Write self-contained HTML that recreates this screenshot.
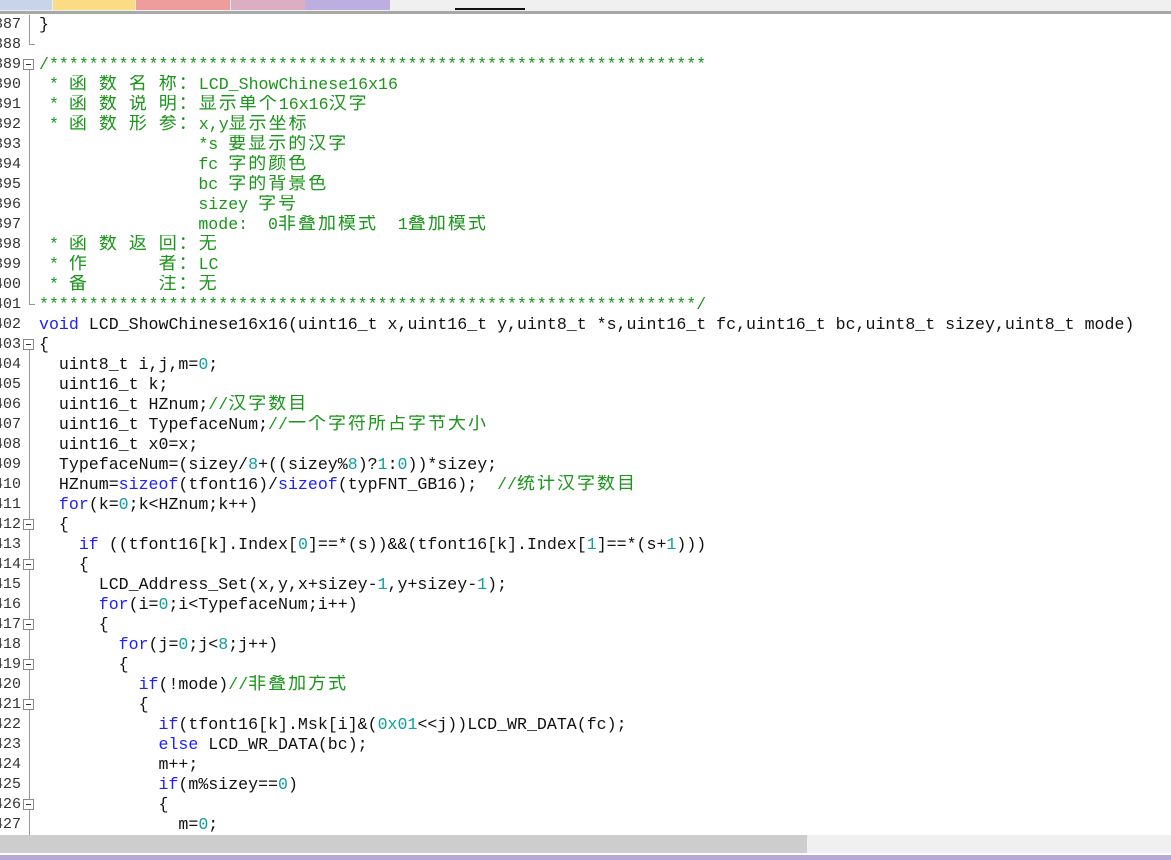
<!DOCTYPE html>
<html><head><meta charset="utf-8"><style>
html,body{margin:0;padding:0;width:1171px;height:860px;overflow:hidden;background:#fff;position:relative}
.tabs{position:absolute;left:0;top:0;width:1171px;height:11px;background:#f0f0f0}
.tab{position:absolute;top:0;height:10px}
.sep{position:absolute;top:11px;left:0;width:1171px;height:3px;background:#a8a8a8}
.code{position:absolute;left:0;top:15px;width:1171px}
.row{position:relative;height:20px;overflow:hidden;font:16.6px/20px "Liberation Mono","Noto Sans CJK SC",monospace;white-space:pre;color:#111}
.ln{position:absolute;right:1150px;top:0;color:#333;width:60px;text-align:right;font-size:15px}
.t{position:absolute;left:39px;top:0;line-height:20px}
.c{color:#1a961a}
.k{color:#2020ff}
.n{color:#10a0a0}
.z{letter-spacing:2px;font-family:"Noto Sans CJK SC",sans-serif;font-size:18px;line-height:0;vertical-align:baseline}
.vl{position:absolute;left:29px;width:1px;background:#999}
.fb{position:absolute;left:23px;width:9px;height:9px;border:1px solid #888;background:#fff}
.fb:after{content:"";position:absolute;left:2px;top:4px;width:5px;height:1px;background:#333}
</style></head><body>
<div class="tabs">
<div class="tab" style="left:0;width:52px;background:#c8d4e8"></div>
<div class="tab" style="left:53px;width:82px;background:#fbdc84"></div>
<div class="tab" style="left:136px;width:94px;background:#ee9c9c"></div>
<div class="tab" style="left:231px;width:74px;background:#dcaec4"></div>
<div class="tab" style="left:305px;width:85px;background:#bcaedf"></div>
<div class="tab" style="left:455px;width:70px;height:2px;top:8px;background:#111"></div>
</div>
<div class="sep"></div>
<div class="vl" style="top:15px;height:30px"></div>
<div class="vl" style="top:44px;left:29px;height:1px;width:6px"></div>
<div class="vl" style="top:70px;height:235px"></div>
<div class="vl" style="top:304px;height:1px;width:6px"></div>
<div class="vl" style="top:350px;height:485px"></div>
<div class="code">
<div class="row"><span class="ln">387</span><span class="t">}</span></div>
<div class="row"><span class="ln">388</span></div>
<div class="row"><span class="ln">389</span><span class="t c">/******************************************************************</span></div>
<div class="row"><span class="ln">390</span><span class="t c"> * <span class="z">函</span> <span class="z">数</span> <span class="z">名</span> <span class="z">称：</span>LCD_ShowChinese16x16</span></div>
<div class="row"><span class="ln">391</span><span class="t c"> * <span class="z">函</span> <span class="z">数</span> <span class="z">说</span> <span class="z">明：显示单个</span>16x16<span class="z">汉字</span></span></div>
<div class="row"><span class="ln">392</span><span class="t c"> * <span class="z">函</span> <span class="z">数</span> <span class="z">形</span> <span class="z">参：</span>x,y<span class="z">显示坐标</span></span></div>
<div class="row"><span class="ln">393</span><span class="t c">                *s <span class="z">要显示的汉字</span></span></div>
<div class="row"><span class="ln">394</span><span class="t c">                fc <span class="z">字的颜色</span></span></div>
<div class="row"><span class="ln">395</span><span class="t c">                bc <span class="z">字的背景色</span></span></div>
<div class="row"><span class="ln">396</span><span class="t c">                sizey <span class="z">字号</span></span></div>
<div class="row"><span class="ln">397</span><span class="t c">                mode:  0<span class="z">非叠加模式</span>  1<span class="z">叠加模式</span></span></div>
<div class="row"><span class="ln">398</span><span class="t c"> * <span class="z">函</span> <span class="z">数</span> <span class="z">返</span> <span class="z">回：无</span></span></div>
<div class="row"><span class="ln">399</span><span class="t c"> * <span class="z">作</span>       <span class="z">者：</span>LC</span></div>
<div class="row"><span class="ln">400</span><span class="t c"> * <span class="z">备</span>       <span class="z">注：无</span></span></div>
<div class="row"><span class="ln">401</span><span class="t c">******************************************************************/</span></div>
<div class="row"><span class="ln">402</span><span class="t"><span class="k">void</span> LCD_ShowChinese16x16(uint16_t x,uint16_t y,uint8_t *s,uint16_t fc,uint16_t bc,uint8_t sizey,uint8_t mode)</span></div>
<div class="row"><span class="ln">403</span><span class="t">{</span></div>
<div class="row"><span class="ln">404</span><span class="t">  uint8_t i,j,m=<span class="n">0</span>;</span></div>
<div class="row"><span class="ln">405</span><span class="t">  uint16_t k;</span></div>
<div class="row"><span class="ln">406</span><span class="t">  uint16_t HZnum;<span class="c">//<span class="z">汉字数目</span></span></span></div>
<div class="row"><span class="ln">407</span><span class="t">  uint16_t TypefaceNum;<span class="c">//<span class="z">一个字符所占字节大小</span></span></span></div>
<div class="row"><span class="ln">408</span><span class="t">  uint16_t x0=x;</span></div>
<div class="row"><span class="ln">409</span><span class="t">  TypefaceNum=(sizey/<span class="n">8</span>+((sizey%<span class="n">8</span>)?<span class="n">1</span>:<span class="n">0</span>))*sizey;</span></div>
<div class="row"><span class="ln">410</span><span class="t">  HZnum=<span class="k">sizeof</span>(tfont16)/<span class="k">sizeof</span>(typFNT_GB16);  <span class="c">//<span class="z">统计汉字数目</span></span></span></div>
<div class="row"><span class="ln">411</span><span class="t">  <span class="k">for</span>(k=<span class="n">0</span>;k&lt;HZnum;k++)</span></div>
<div class="row"><span class="ln">412</span><span class="t">  {</span></div>
<div class="row"><span class="ln">413</span><span class="t">    <span class="k">if</span> ((tfont16[k].Index[<span class="n">0</span>]==*(s))&amp;&amp;(tfont16[k].Index[<span class="n">1</span>]==*(s+<span class="n">1</span>)))</span></div>
<div class="row"><span class="ln">414</span><span class="t">    {</span></div>
<div class="row"><span class="ln">415</span><span class="t">      LCD_Address_Set(x,y,x+sizey-<span class="n">1</span>,y+sizey-<span class="n">1</span>);</span></div>
<div class="row"><span class="ln">416</span><span class="t">      <span class="k">for</span>(i=<span class="n">0</span>;i&lt;TypefaceNum;i++)</span></div>
<div class="row"><span class="ln">417</span><span class="t">      {</span></div>
<div class="row"><span class="ln">418</span><span class="t">        <span class="k">for</span>(j=<span class="n">0</span>;j&lt;<span class="n">8</span>;j++)</span></div>
<div class="row"><span class="ln">419</span><span class="t">        {</span></div>
<div class="row"><span class="ln">420</span><span class="t">          <span class="k">if</span>(!mode)<span class="c">//<span class="z">非叠加方式</span></span></span></div>
<div class="row"><span class="ln">421</span><span class="t">          {</span></div>
<div class="row"><span class="ln">422</span><span class="t">            <span class="k">if</span>(tfont16[k].Msk[i]&amp;(<span class="n">0x01</span>&lt;&lt;j))LCD_WR_DATA(fc);</span></div>
<div class="row"><span class="ln">423</span><span class="t">            <span class="k">else</span> LCD_WR_DATA(bc);</span></div>
<div class="row"><span class="ln">424</span><span class="t">            m++;</span></div>
<div class="row"><span class="ln">425</span><span class="t">            <span class="k">if</span>(m%sizey==<span class="n">0</span>)</span></div>
<div class="row"><span class="ln">426</span><span class="t">            {</span></div>
<div class="row"><span class="ln">427</span><span class="t">              m=<span class="n">0</span>;</span></div>
</div>
<div class="fb" style="top:59px"></div>
<div class="fb" style="top:339px"></div>
<div class="fb" style="top:519px"></div>
<div class="fb" style="top:559px"></div>
<div class="fb" style="top:619px"></div>
<div class="fb" style="top:659px"></div>
<div class="fb" style="top:699px"></div>
<div class="fb" style="top:799px"></div>
<div style="position:absolute;left:0;top:835px;width:1171px;height:18px;background:#f0f0f0"></div>
<div style="position:absolute;left:0;top:835px;width:807px;height:18px;background:#cdcdcd"></div>
<div style="position:absolute;left:0;top:855px;width:1171px;height:5px;background:#b8a8d8"></div>
</body></html>
